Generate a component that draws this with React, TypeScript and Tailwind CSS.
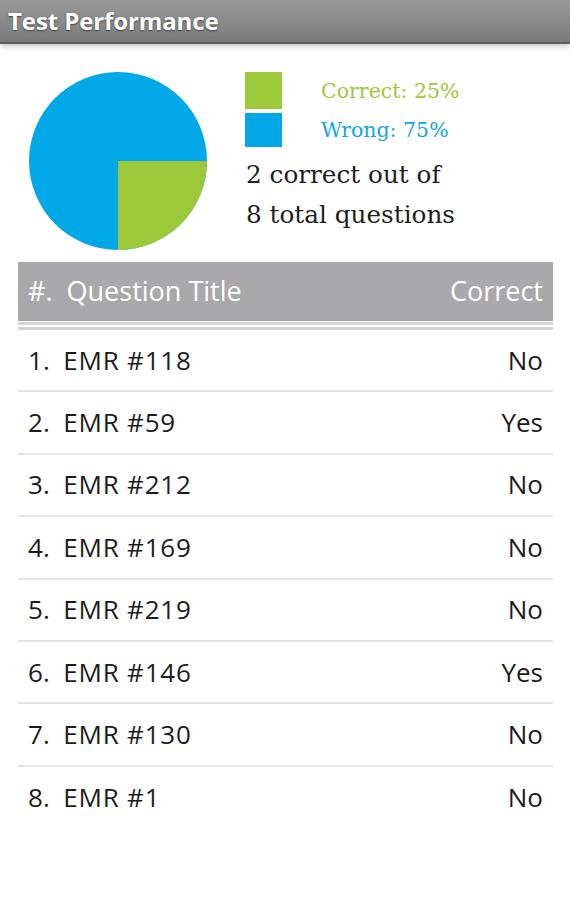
import React from "react";

const rows = [
  { n: 1, title: "EMR #118", correct: false },
  { n: 2, title: "EMR #59", correct: true },
  { n: 3, title: "EMR #212", correct: false },
  { n: 4, title: "EMR #169", correct: false },
  { n: 5, title: "EMR #219", correct: false },
  { n: 6, title: "EMR #146", correct: true },
  { n: 7, title: "EMR #130", correct: false },
  { n: 8, title: "EMR #1", correct: false },
];

const sans = "font-['Open_Sans',_'DejaVu_Sans',_sans-serif]";
const serif = "font-['DejaVu_Serif',_'Liberation_Serif',_serif]";

const PieChart: React.FC = () => (
  <svg width="180" height="180" viewBox="0 0 180 180">
    <circle cx="90" cy="90" r="89" fill="#00a8e8" />
    <path d="M90 90 L179 90 A89 89 0 0 1 90 179 Z" fill="#9bc93a" />
  </svg>
);

export default function App() {
  const correct = rows.filter((r) => r.correct).length;

  return (
    <div className={`w-[570px] h-[900px] bg-white ${sans}`}>
      <div className="h-[44px] bg-gradient-to-b from-[#9a9a9a] to-[#7b7b7b] border-b-2 border-[#5e5e5e] flex items-center px-2 shadow-[0_3px_5px_rgba(0,0,0,0.18)]">
        <span className="text-white font-bold text-[24px] tracking-[-0.1px] [text-shadow:0_1px_2px_rgba(0,0,0,0.5)]">
          Test Performance
        </span>
      </div>

      <div className="flex pl-[28px] pt-[27px]">
        <PieChart />
        <div className="ml-[37px] mt-[1px]">
          <div className="flex items-center h-[37px]">
            <div className="w-[37px] h-[37px] bg-[#9bc93a]" />
            <span className={`${serif} text-[#9bc93a] text-[20.5px] ml-[39px] mt-[1px]`}>
              Correct: 25%
            </span>
          </div>
          <div className="flex items-center h-[34px] mt-[4px]">
            <div className="w-[37px] h-[34px] bg-[#00a8e8]" />
            <span className={`${serif} text-[#12a6e6] text-[20.5px] ml-[39px] mt-[1px]`}>
              Wrong: 75%
            </span>
          </div>
          <div className={`${serif} text-[#1e1e1e] text-[24.7px] leading-[40px] mt-[8px] ml-[1px]`}>
            <div>{correct} correct out of</div>
            <div>{rows.length} total questions</div>
          </div>
        </div>
      </div>

      <div className="mx-[18px] mt-[11px] w-[535px]">
        <div className="h-[59px] bg-[#a9a8aa] flex items-center justify-between px-[10px] text-white text-[27px]">
          <span>#.&nbsp; Question Title</span>
          <span>Correct</span>
        </div>
        <div className="h-[3px] bg-[#d4d4d4] mt-[1px]" />
        <div className="h-[2px] bg-white" />
        <div className="h-[3px] bg-[#d4d4d4]" />
        {rows.map((r, i) => (
          <div
            key={r.n}
            className={`h-[62.4px] flex items-center justify-between px-[10px] text-[#1c1c1c] text-[26px] ${
              i < rows.length - 1 ? "border-b-2 border-[#e4e4e4]" : ""
            }`}
          >
            <span>
              {r.n}.&nbsp; <span className="tracking-[0.8px]">{r.title}</span>
            </span>
            <span>{r.correct ? "Yes" : "No"}</span>
          </div>
        ))}
      </div>
    </div>
  );
}
